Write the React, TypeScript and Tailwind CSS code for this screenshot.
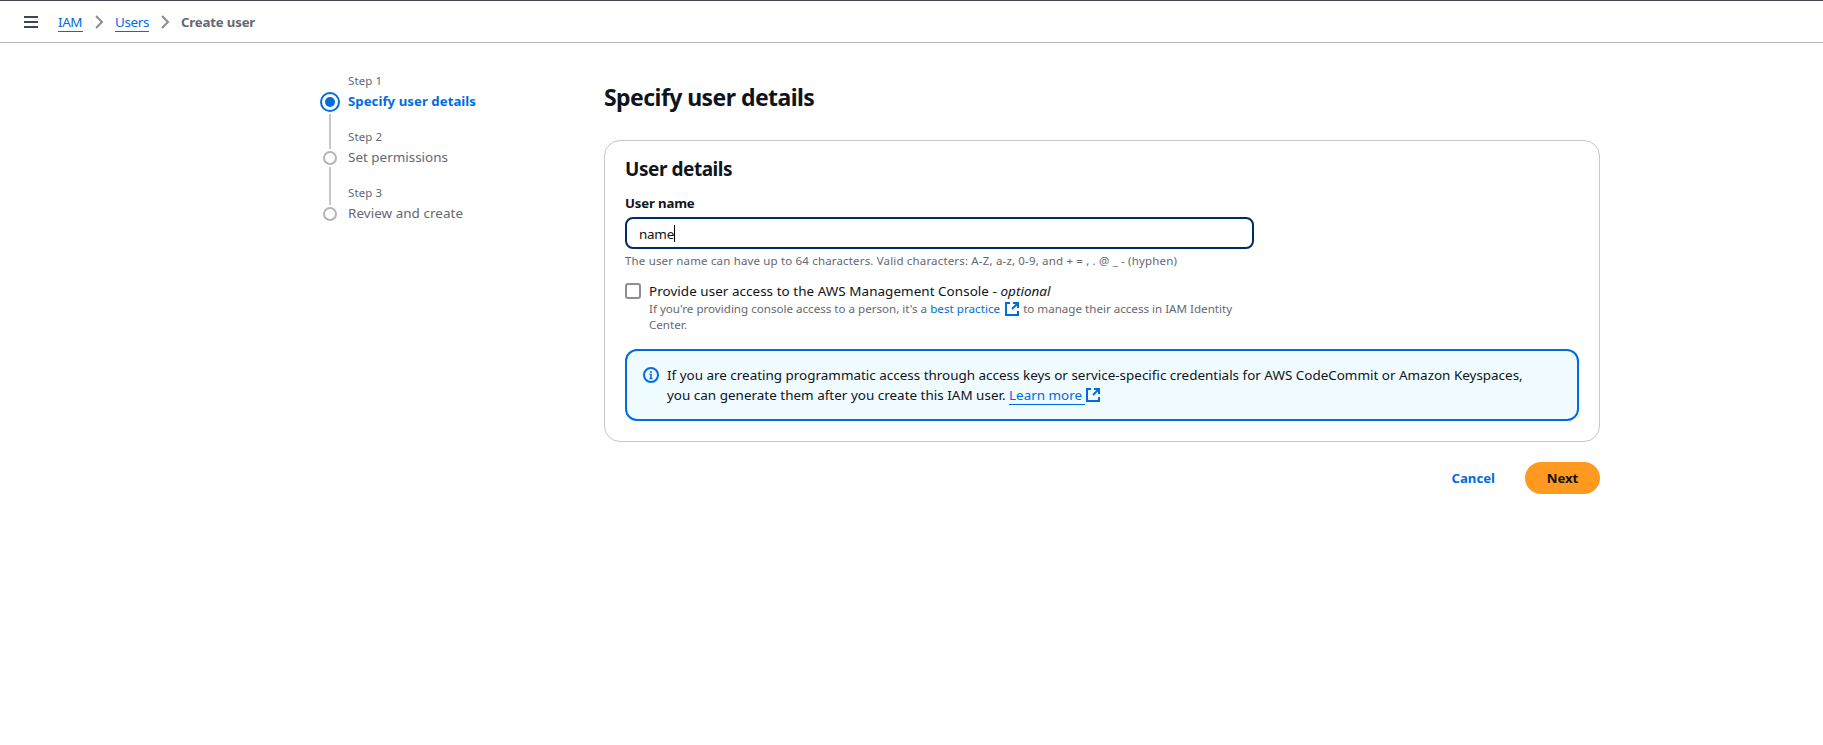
import type { ReactNode } from "react";

function Chevron() {
  return (
    <svg className="block h-4 w-4 shrink-0" viewBox="0 0 16 16" fill="none" stroke="#8c8c94" strokeWidth="2">
      <path d="m5 2 6 6-6 6" />
    </svg>
  );
}

function ExternalIcon({ className }: { className: string }) {
  return (
    <svg className={className} viewBox="0 0 16 16" fill="none" stroke="#006ce0" strokeWidth="2">
      <path d="M14 10v4H2V2h4" />
      <path d="M9 2h5v5" />
      <path d="m8 8 5.5-5.5" />
    </svg>
  );
}

function StepText({ label, children }: { label: string; children: ReactNode }) {
  return (
    <div className="h-14">
      <div className="h-[18px] text-[11.49px] leading-[18px] tracking-[0.09px] text-[#656871]">{label}</div>
      <div className="mt-px h-5 leading-5">{children}</div>
    </div>
  );
}

export default function App() {
  return (
    <div className="h-[745px] w-full overflow-hidden bg-white font-['Noto_Sans','Noto_Sans_CJK_SC',sans-serif] text-[13.44px] leading-5 whitespace-nowrap text-[#0f141a]">
      <header className="flex h-[43px] items-center border-t border-b border-t-[#424650] border-b-[#b4b4bb] pl-[23px]">
        <svg className="block h-4 w-4" viewBox="0 0 16 16" stroke="#424650" strokeWidth="2">
          <path d="M1 3h14M1 8h14M1 13h14" />
        </svg>
        <nav className="ml-[19px] flex items-center">
          <a className="h-5 w-[25px] border-b border-[#006ce0] leading-5 tracking-[-0.4px] text-[#006ce0]">IAM</a>
          <span className="ml-[8px]"><Chevron /></span>
          <a className="ml-[8px] h-5 w-[34px] border-b border-[#006ce0] leading-5 tracking-[-0.35px] text-[#006ce0]">Users</a>
          <span className="ml-[8px]"><Chevron /></span>
          <span className="ml-[8px] text-[13.2px] font-bold tracking-[-0.16px] text-[#656871]">Create user</span>
        </nav>
      </header>

      <div className="flex pl-[320px]">
        <aside className="flex w-[284px] pt-[29px]">
          <div className="flex w-5 flex-col items-center pt-5">
            <svg className="block h-5 w-5" viewBox="0 0 20 20">
              <circle cx="10" cy="10" r="9" fill="none" stroke="#006ce0" strokeWidth="2" />
              <circle cx="10" cy="10" r="5" fill="#006ce0" />
            </svg>
            <div className="mt-[2px] h-[35px] w-[2px] bg-[#c6c6cd]" />
            <div className="mt-[2px] h-[14px] w-[14px] rounded-full border-2 border-[#b4b4bb]" />
            <div className="mt-[2px] h-[38px] w-[2px] bg-[#c6c6cd]" />
            <div className="mt-[2px] h-[14px] w-[14px] rounded-full border-2 border-[#b4b4bb]" />
          </div>
          <div className="ml-2 flex flex-col">
            <StepText label="Step 1">
              <span className="text-[13.2px] font-bold tracking-[0.05px] text-[#006ce0]">Specify user details</span>
            </StepText>
            <StepText label="Step 2">
              <span className="text-[#656871]">Set permissions</span>
            </StepText>
            <StepText label="Step 3">
              <span className="tracking-[0.05px] text-[#656871]">Review and create</span>
            </StepText>
          </div>
        </aside>

        <main className="w-[996px] pt-[39px]">
          <h1 className="h-[30px] text-[23px] leading-[30px] font-bold tracking-[-0.56px]">Specify user details</h1>

          <section className="mt-[28px] h-[302px] rounded-2xl border border-[#c6c6cd] px-[20px] pt-4">
            <h2 className="h-6 text-[19px] leading-6 font-bold tracking-[-0.45px]">User details</h2>
            <label className="mt-3 block h-5 text-[13.2px] font-bold tracking-[-0.16px]">User name</label>
            <div className="mt-1 flex h-8 w-[629px] items-center rounded-lg border-2 border-[#002b66] pl-3">
              <span className="mt-px tracking-[-0.25px]">name</span>
              <span className="h-[17px] w-px bg-black" />
            </div>
            <p className="mt-1 h-4 text-[11.49px] leading-4 tracking-[0.172px] text-[#656871]">
              The user name can have up to 64 characters. Valid characters: A-Z, a-z, 0-9, and + = , . @ _ - (hyphen)
            </p>

            <div className="mt-[12px] flex">
              <div className="mt-[2px] h-4 w-4 rounded-[3px] border-2 border-[#8c8c94]" />
              <div className="ml-2">
                <div className="h-5 text-[13.44px] tracking-[0.05px]">
                  Provide user access to the AWS Management Console - <i>optional</i>
                </div>
                <p className="h-8 text-[11.6px] leading-4 text-[#656871]">
                  If you're providing console access to a person, it's a{" "}
                  <a className="tracking-[0.04px] text-[#006ce0]">best practice</a>
                  <ExternalIcon className="mr-[3px] ml-1 inline-block h-4 w-4 align-[-4px]" />
                  to manage their access in IAM Identity
                  <br />
                  Center.
                </p>
              </div>
            </div>

            <div className="mt-[16px] flex h-[72px] rounded-xl border-2 border-[#006ce0] bg-[#f0fbff] pt-[14px] pl-4">
              <svg className="mt-[2px] block h-4 w-4" viewBox="0 0 16 16" fill="none">
                <circle cx="8" cy="8" r="7" stroke="#006ce0" strokeWidth="2" />
                <path d="M8 4v2M6.5 7.5H8V12M6.5 11.5h3" stroke="#006ce0" strokeWidth="1.5" />
              </svg>
              <p className="ml-2">
                If you are creating programmatic access through access keys or service-specific credentials for AWS CodeCommit or Amazon Keyspaces,
                <br />
                <span className="tracking-[0.015px]">you can generate them after you create this IAM user. </span>
                <a className="inline-block h-5 w-[76px] border-b border-[#006ce0] align-top text-[#006ce0]">Learn more</a>
                <ExternalIcon className="inline-block h-4 w-4 align-[-3px]" />
              </p>
            </div>
          </section>

          <div className="mt-5 flex h-8 items-center justify-end text-[13.2px] font-bold">
            <button className="mr-[30px] text-[#006ce0]">Cancel</button>
            <button className="h-8 w-[75px] rounded-full bg-[#ff991f] tracking-[-0.1px]">Next</button>
          </div>
        </main>
      </div>
    </div>
  );
}
